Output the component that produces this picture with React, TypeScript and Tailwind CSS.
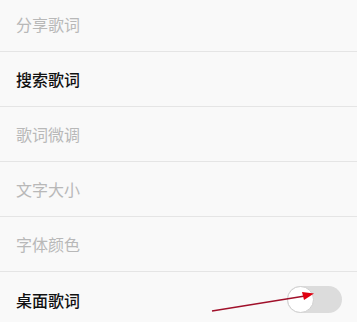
import React from "react";

const rows = [
  { label: "分享歌词", enabled: false },
  { label: "搜索歌词", enabled: true },
  { label: "歌词微调", enabled: false },
  { label: "文字大小", enabled: false },
  { label: "字体颜色", enabled: false },
];

const Toggle = () => (
  <div className="relative h-[27px] w-[55px] rounded-full bg-[#dcdcdc]">
    <div className="absolute left-0 top-0 h-[27px] w-[27px] rounded-full border border-[#d0d0d0] bg-white" />
  </div>
);

export default function App() {
  return (
    <div
      className="relative h-[322px] w-[357px] overflow-hidden bg-[#f9f9f9]"
      style={{ fontFamily: '"Noto Sans CJK SC", "Noto Sans", sans-serif' }}
    >
      <div className="-mt-[3px] flex flex-col">
        {rows.map((row) => (
          <div
            key={row.label}
            className="flex h-[55px] items-center border-b border-[#e5e5e5] pl-4"
          >
            <span
              className={
                row.enabled
                  ? "text-[16px] font-medium text-[#111111]"
                  : "text-[16px] text-[#b8b8b8]"
              }
            >
              {row.label}
            </span>
          </div>
        ))}
        <div className="flex h-[55px] items-center justify-between pl-4 pr-[15px]">
          <span className="text-[16px] font-medium text-[#111111]">桌面歌词</span>
          <Toggle />
        </div>
      </div>
      <svg
        className="absolute left-0 top-0"
        width="357"
        height="322"
        viewBox="0 0 357 322"
      >
        <line x1="212" y1="311" x2="305" y2="296" stroke="#a0102a" strokeWidth="1.3" />
        <polygon points="314,293.5 302,292 304,300" fill="#e00010" />
      </svg>
    </div>
  );
}
